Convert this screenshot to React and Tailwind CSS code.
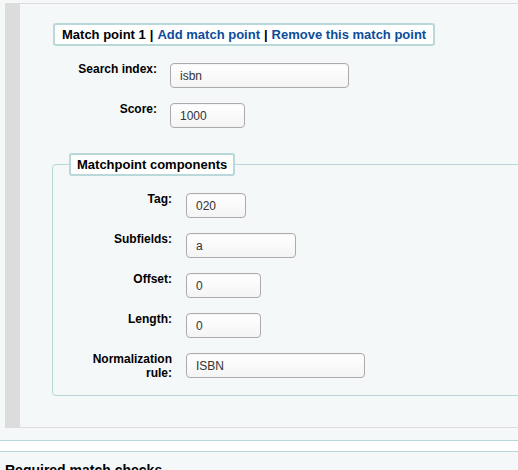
const Field = ({ label, value, width, labelWidth, gap }) => (
  <div className="flex items-start">
    <label className={`${labelWidth} ${gap} shrink-0 text-right text-[12px] leading-[14px] font-bold text-black`}>
      {label}
    </label>
    <input
      readOnly
      defaultValue={value}
      className={`${width} mt-px h-[25px] rounded-[4px] border border-[#ababab] bg-linear-to-b from-white to-[#f4f4f4] pl-[9px] text-[12px] text-[#333] shadow-[inset_0_1px_1px_rgba(0,0,0,0.04)] outline-none`}
    />
  </div>
);

const components = [
  { label: "Tag:", value: "020", width: "w-[60px]" },
  { label: "Subfields:", value: "a", width: "w-[110px]" },
  { label: "Offset:", value: "0", width: "w-[75px]" },
  { label: "Length:", value: "0", width: "w-[75px]" },
  {
    label: (
      <>
        Normalization
        <br />
        rule:
      </>
    ),
    value: "ISBN",
    width: "w-[179px]",
  },
];

export default function App() {
  return (
    <div className="w-[518px] h-[470px] overflow-hidden bg-[#f4f8f9] font-['Liberation_Sans',Arial,sans-serif] pt-[3px]">
      {/* match point block */}
      <div className="ml-[5px] w-[700px] border-y border-l-[15px] border-[#dcdcdc] pl-[33px] pt-[18px] pb-[31px]">
        <div className="inline-flex h-[23px] items-center rounded-[3px] border-2 border-[#b9d8d9] bg-white px-[7px] text-[13px] font-bold text-black">
          <span>Match point 1</span>
          <span className="px-[4px]">|</span>
          <a href="#" className="text-[#0b4d9b]">Add match point</a>
          <span className="px-[4px]">|</span>
          <a href="#" className="text-[#0b4d9b]">Remove this match point</a>
        </div>

        <div className="mt-[16px] flex flex-col gap-[14px]">
          <Field label="Search index:" value="isbn" width="w-[179px]" labelWidth="w-[104px]" gap="mr-[13px]" />
          <Field label="Score:" value="1000" width="w-[75px]" labelWidth="w-[104px]" gap="mr-[13px]" />
        </div>

        {/* matchpoint components */}
        <fieldset className="-ml-px mt-[25px] w-[600px] rounded-[4px] border border-[#b9d8d9] p-0">
          <legend className="ml-[16px] flex h-[23px] items-center rounded-[3px] border-2 border-[#b9d8d9] bg-white px-[6px] text-[13px] font-bold text-black">
            Matchpoint components
          </legend>
          <div className="mt-[16px] flex flex-col gap-[14px] pb-[15px]">
            {components.map((c, i) => (
              <Field key={i} label={c.label} value={c.value} width={c.width} labelWidth="w-[119px]" gap="mr-[14px]" />
            ))}
          </div>
        </fieldset>
      </div>

      {/* divider band */}
      <div className="mt-[12px] h-[12px] border-y border-[#b9d8d9] bg-white" />

      <h2 className="mt-[8px] pl-[5px] text-[14px] font-bold text-black">Required match checks</h2>
    </div>
  );
}
